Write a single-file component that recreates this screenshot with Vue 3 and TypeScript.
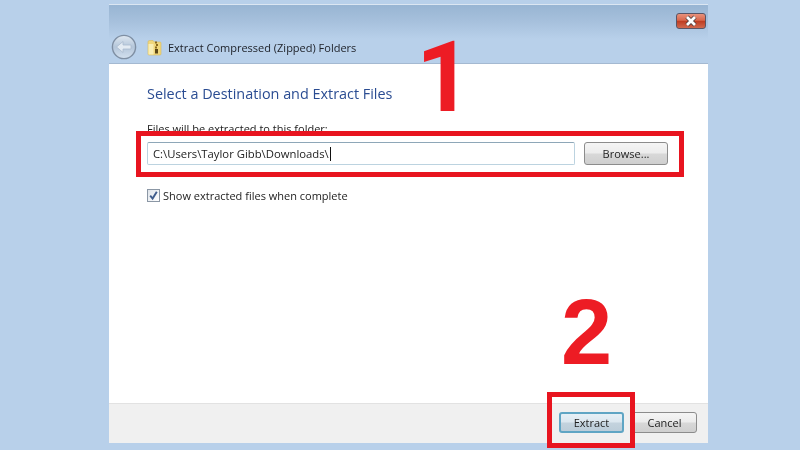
<script setup lang="ts">
const path = 'C:\\Users\\Taylor Gibb\\Downloads\\'
</script>

<template>
  <div class="stage">
    <div class="window">
      <header class="chrome">
        <div class="title-row">
          <button class="close" aria-label="Close">
            <svg width="14" height="12" viewBox="0 0 14 12">
              <path d="M3 2 L11 10 M11 2 L3 10" stroke="#4a3a3a" stroke-width="4.4" />
              <path d="M3 2 L11 10 M11 2 L3 10" stroke="#fff" stroke-width="2.8" />
            </svg>
          </button>
        </div>
        <div class="nav-row">
          <svg class="back" width="26" height="26" viewBox="0 0 26 26">
            <defs>
              <linearGradient id="backFill" x1="0" y1="0" x2="0" y2="1">
                <stop offset="0" stop-color="#dfe8f1" />
                <stop offset="0.5" stop-color="#b4c6da" />
                <stop offset="1" stop-color="#d3e0ee" />
              </linearGradient>
            </defs>
            <circle cx="13" cy="13" r="11.6" fill="url(#backFill)" stroke="#7f8fa3" stroke-width="1.4" />
            <path d="M5.5 13 L12 7.5 V11 H20 V15 H12 V18.5 Z" fill="#e3ebf3" stroke="#a9bace" stroke-width="0.8" stroke-linejoin="round" />
          </svg>
          <svg class="zip" width="15" height="17" viewBox="0 0 15 17">
            <path d="M1 3 Q1 1.5 2.5 1.5 H6 L7.5 3 H13 Q14 3 14 4 V15 Q14 16 13 16 H2 Q1 16 1 15 Z" fill="#f0d77c" stroke="#d8bb5c" stroke-width="0.6" />
            <rect x="1.5" y="5" width="5" height="10.5" fill="#f9eeb4" />
            <path d="M8 2.5 h2 v2 h-2 z M9 5 h2 v2 h-2 z M8 7.5 h2 v2 h-2 z" fill="#8a6a1e" />
            <rect x="8" y="10" width="3" height="4.5" fill="#5b4716" />
          </svg>
          <span class="wiz-title">Extract Compressed (Zipped) Folders</span>
        </div>
      </header>

      <main class="content">
        <h1 class="heading">Select a Destination and Extract Files</h1>
        <label class="field-label">Files will be extracted to this folder:</label>
        <div class="path-row">
          <div class="input">{{ path }}<span class="caret"></span></div>
          <button class="btn browse">Browse...</button>
        </div>
        <div class="check-row">
          <span class="check">
            <svg width="11" height="11" viewBox="0 0 11 11">
              <path d="M2.2 5.6 L4.6 8.6 L8.8 1.8" fill="none" stroke="#3f5c8c" stroke-width="1.9" />
            </svg>
          </span>
          <span class="check-label">Show extracted files when complete</span>
        </div>
      </main>

      <footer class="footer">
        <button class="btn primary">Extract</button>
        <button class="btn cancel">Cancel</button>
      </footer>
    </div>

    <div class="mark mark-path"></div>
    <div class="mark mark-extract"></div>
    <span class="step step-1">1</span>
    <span class="step step-2">2</span>
  </div>
</template>

<style scoped>
.stage {
  position: relative;
  width: 800px;
  height: 450px;
  box-sizing: border-box;
  padding: 4px 92px 7px 109px;
  background: #b8d0ea;
  overflow: hidden;
  font-family: "Open Sans", "Noto Sans", sans-serif;
  color: #2c2c2c;
}
.window {
  height: 100%;
  display: flex;
  flex-direction: column;
  border-top: 1px solid #dbe6f2;
  box-sizing: border-box;
  filter: blur(0.3px);
}
.chrome {
  height: 59px;
  flex: none;
  display: flex;
  flex-direction: column;
  background: linear-gradient(#98b5d3 0, #a6c0dc 16px, #b8d0ea 34px);
  border-bottom: 1px solid #a4b9d1;
  box-sizing: border-box;
}
.title-row {
  height: 26px;
  display: flex;
  justify-content: flex-end;
  padding: 8px 2px 0 0;
  box-sizing: border-box;
}
.close {
  width: 30px;
  height: 16px;
  padding: 0;
  display: flex;
  align-items: center;
  justify-content: center;
  border: 1px solid #5a5565;
  border-radius: 3px;
  background: linear-gradient(#e8927c 0, #d9674c 45%, #bf3d22 52%, #d0694f 100%);
}
.nav-row {
  display: flex;
  align-items: center;
  padding: 3px 0 0 2px;
}
.back {
  flex: none;
}
.zip {
  flex: none;
  margin-left: 10px;
}
.wiz-title {
  margin-left: 6px;
  font-size: 11px;
  color: #20242c;
}
.content {
  flex: 1;
  display: flex;
  flex-direction: column;
  background: #fff;
  padding: 20px 40px 0 38px;
}
.heading {
  margin: 0;
  font-size: 14.4px;
  line-height: 20px;
  font-weight: 400;
  color: #2a4c92;
}
.field-label {
  margin-top: 17px;
  font-size: 11px;
  line-height: 15px;
  color: #222;
}
.path-row {
  display: flex;
  gap: 9px;
  margin-top: 6px;
}
.input {
  flex: 1;
  height: 23px;
  box-sizing: border-box;
  padding-left: 5px;
  display: flex;
  align-items: center;
  font-size: 11.3px;
  color: #222;
  border: 1px solid #bcd3e0;
  border-top-color: #8ea7b8;
  border-radius: 2px;
}
.caret {
  width: 1px;
  height: 14px;
  background: #111;
  margin-left: 1px;
}
.btn {
  height: 21px;
  padding: 0;
  font-family: inherit;
  font-size: 11px;
  color: #1e1e1e;
  border: 1px solid #8c8c8c;
  border-radius: 3px;
  background: linear-gradient(#f5f5f5 0, #ececec 48%, #d8d8d8 52%, #cfcfcf 100%);
}
.browse {
  width: 84px;
  height: 23px;
}
.check-row {
  display: flex;
  align-items: center;
  margin-top: 23px;
}
.check {
  width: 13px;
  height: 13px;
  box-sizing: border-box;
  display: flex;
  align-items: center;
  justify-content: center;
  border: 1px solid #8b97a5;
  background: linear-gradient(135deg, #dfe4ea, #fff);
}
.check-label {
  margin-left: 3px;
  font-size: 11px;
  color: #222;
}
.footer {
  height: 40px;
  flex: none;
  display: flex;
  justify-content: flex-end;
  gap: 8px;
  padding: 8px 11px 0 0;
  box-sizing: border-box;
  background: #f0f0f0;
  border-top: 1px solid #e2e2e2;
}
.primary,
.cancel {
  width: 65px;
}
.primary {
  border: 2px solid #5fa5c4;
  background: linear-gradient(#e6f0f6 0, #dce7ef 48%, #c4d3de 52%, #bccdd9 100%);
}
.mark {
  position: absolute;
  box-sizing: border-box;
  border: 5px solid #e8141f;
}
.mark-path {
  left: 136px;
  top: 131px;
  width: 548px;
  height: 46px;
}
.mark-extract {
  left: 547px;
  top: 392px;
  width: 88px;
  height: 56px;
}
.step {
  position: absolute;
  font-weight: 700;
  line-height: 98px;
  color: #ed1c24;
}
.step-1 {
  left: 416px;
  top: 29px;
  font-family: Roboto, "Liberation Sans", sans-serif;
  font-size: 98px;
}
.step-2 {
  left: 561px;
  top: 283px;
  font-family: "Liberation Sans", Arial, sans-serif;
  font-size: 92px;
}
</style>
